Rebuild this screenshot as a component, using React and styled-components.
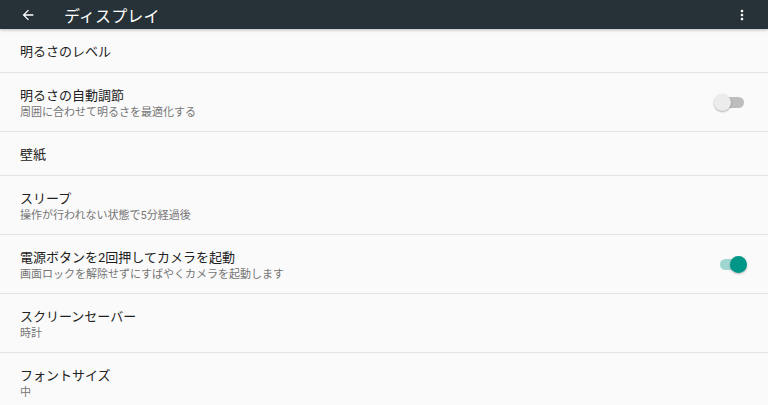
import React from "react";
import styled, { createGlobalStyle } from "styled-components";

const GlobalStyle = createGlobalStyle`
  body {
    margin: 0;
    background: #fafafa;
    font-family: Roboto, "Noto Sans CJK JP", sans-serif;
  }
`;

const Page = styled.div`
  width: 768px;
  height: 405px;
  overflow: hidden;
  background: #fafafa;
`;

const Toolbar = styled.header`
  height: 29px;
  background: #263238;
  display: flex;
  align-items: center;
  padding: 0 18px 0 20px;
  box-shadow: 0 1px 3px rgba(0, 0, 0, 0.25);
  position: relative;
  z-index: 1;
`;

const IconButton = styled.button`
  background: none;
  border: none;
  padding: 0;
  display: flex;
  align-items: center;
  justify-content: center;
  cursor: pointer;
`;

const Title = styled.h1`
  flex: 1;
  margin: 0 0 0 28px;
  font-size: 16px;
  font-weight: 400;
  color: #ffffff;
  letter-spacing: 0.1px;
`;

const List = styled.div`
  display: flex;
  flex-direction: column;
`;

const Row = styled.div`
  height: ${(p) => (p.$sub ? 58 : 43)}px;
  border-bottom: 1px solid #e3e3e3;
  display: flex;
  align-items: center;
  padding: 0 24px 0 20px;
`;

const Texts = styled.div`
  flex: 1;
  display: flex;
  flex-direction: column;
  gap: 1px;
  padding-top: 3px;
`;

const Primary = styled.div`
  font-size: 13px;
  color: #212121;
  line-height: 16px;
`;

const Secondary = styled.div`
  font-size: 11px;
  color: #757575;
  line-height: 15px;
`;

const Track = styled.div`
  position: relative;
  width: 24px;
  height: 11px;
  border-radius: 6px;
  background: ${(p) => (p.$on ? "#9fd6d0" : "#bdbdbd")};
`;

const Thumb = styled.div`
  position: absolute;
  top: -3px;
  left: ${(p) => (p.$on ? "10px" : "-6px")};
  width: 17px;
  height: 17px;
  border-radius: 50%;
  background: ${(p) => (p.$on ? "#009688" : "#ececec")};
  box-shadow: 0 1px 2px rgba(0, 0, 0, 0.3);
`;

const Switch = ({ on }) => (
  <Track $on={on}>
    <Thumb $on={on} />
  </Track>
);

const items = [
  { title: "明るさのレベル" },
  { title: "明るさの自動調節", sub: "周囲に合わせて明るさを最適化する", toggle: false },
  { title: "壁紙" },
  { title: "スリープ", sub: "操作が行われない状態で5分経過後" },
  { title: "電源ボタンを2回押してカメラを起動", sub: "画面ロックを解除せずにすばやくカメラを起動します", toggle: true },
  { title: "スクリーンセーバー", sub: "時計" },
  { title: "フォントサイズ", sub: "中" },
];

const App = () => {
  return (
    <Page>
      <GlobalStyle />
      <Toolbar>
        <IconButton>
          <svg width="16" height="16" viewBox="0 0 24 24">
            <path d="M20 11H7.83l5.59-5.59L12 4l-8 8 8 8 1.41-1.41L7.83 13H20v-2z" fill="#fff" />
          </svg>
        </IconButton>
        <Title>ディスプレイ</Title>
        <IconButton>
          <svg width="16" height="18" viewBox="0 0 24 24">
            <path d="M12 8c1.1 0 2-.9 2-2s-.9-2-2-2-2 .9-2 2 .9 2 2 2zm0 2c-1.1 0-2 .9-2 2s.9 2 2 2 2-.9 2-2-.9-2-2-2zm0 6c-1.1 0-2 .9-2 2s.9 2 2 2 2-.9 2-2-.9-2-2-2z" fill="#fff" />
          </svg>
        </IconButton>
      </Toolbar>
      <List>
        {items.map((it) => (
          <Row key={it.title} $sub={!!it.sub}>
            <Texts>
              <Primary>{it.title}</Primary>
              {it.sub && <Secondary>{it.sub}</Secondary>}
            </Texts>
            {it.toggle !== undefined && <Switch on={it.toggle} />}
          </Row>
        ))}
      </List>
    </Page>
  );
};

export default App;
